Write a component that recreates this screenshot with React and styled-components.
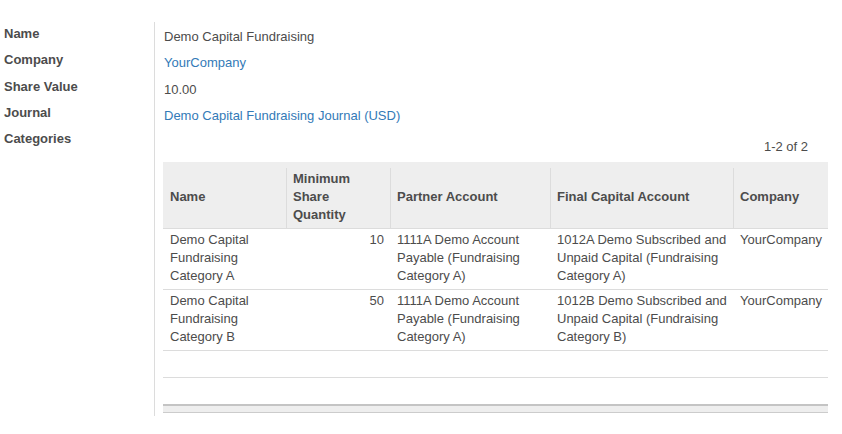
import React from 'react'
import styled, { createGlobalStyle } from 'styled-components'

const fields = [
  { label: 'Name', value: 'Demo Capital Fundraising' },
  { label: 'Company', value: 'YourCompany', link: true },
  { label: 'Share Value', value: '10.00' },
  { label: 'Journal', value: 'Demo Capital Fundraising Journal (USD)', link: true },
]

const columns = [
  { title: 'Name', width: 123 },
  { title: 'Minimum Share Quantity', width: 104 },
  { title: 'Partner Account', width: 160 },
  { title: 'Final Capital Account', width: 183 },
  { title: 'Company', width: 95 },
]

const categories = [
  {
    name: 'Demo Capital Fundraising Category A',
    qty: 10,
    partner: '1111A Demo Account Payable (Fundraising Category A)',
    capital: '1012A Demo Subscribed and Unpaid Capital (Fundraising Category A)',
    company: 'YourCompany',
  },
  {
    name: 'Demo Capital Fundraising Category B',
    qty: 50,
    partner: '1111A Demo Account Payable (Fundraising Category A)',
    capital: '1012B Demo Subscribed and Unpaid Capital (Fundraising Category B)',
    company: 'YourCompany',
  },
]

const App = () => {
  return (
    <>
      <GlobalStyle />
      <Page>
        <Labels>
          {fields.map(({ label }) => (
            <Label key={label}>{label}</Label>
          ))}
          <Label>Categories</Label>
        </Labels>
        <Content>
          {fields.map(({ label, value, link }) => (
            <Value key={label} $link={link}>{value}</Value>
          ))}
          <Pager>1-2 of 2</Pager>
          <Table>
            <colgroup>
              {columns.map(({ title, width }) => (
                <col key={title} style={{ width }} />
              ))}
            </colgroup>
            <thead>
              <tr>
                {columns.map(({ title }, i) => (
                  <Th key={title} $divider={i > 0}>{title}</Th>
                ))}
              </tr>
            </thead>
            <tbody>
              {categories.map((c) => (
                <Row key={c.name}>
                  <Td>{c.name}</Td>
                  <Td $num>{c.qty}</Td>
                  <Td>{c.partner}</Td>
                  <Td>{c.capital}</Td>
                  <Td>{c.company}</Td>
                </Row>
              ))}
              <EmptyRow $border><td colSpan={5} /></EmptyRow>
              <EmptyRow><td colSpan={5} /></EmptyRow>
            </tbody>
            <tfoot>
              <Foot><td colSpan={5} /></Foot>
            </tfoot>
          </Table>
        </Content>
      </Page>
    </>
  )
}

export default App

const GlobalStyle = createGlobalStyle`
  body {
    margin: 0;
    background: #fff;
    font-family: "Liberation Sans", Arial, sans-serif;
    font-size: 13px;
    color: #4c4c4c;
  }
`

const Page = styled.div`
  display: flex;
  align-items: flex-start;
  padding-top: 21px;
`

const Labels = styled.div`
  width: 154px;
  padding-left: 4px;
  box-sizing: border-box;
  flex-shrink: 0;
`

const Label = styled.div`
  font-weight: bold;
  line-height: 26.3px;
`

const Content = styled.div`
  flex: 1;
  margin-top: 1px;
  padding: 2px 14px 3px 8px;
  border-left: 1px solid #dcdcdc;
`

const Value = styled.div`
  line-height: 26.3px;
  padding-left: 1px;
  color: ${(p) => (p.$link ? '#337ab7' : '#4c4c4c')};
`

const Pager = styled.div`
  text-align: right;
  line-height: 18px;
  margin-top: 9px;
  padding-right: 20px;
  margin-bottom: 6px;
`

const Table = styled.table`
  width: 665px;
  table-layout: fixed;
  border-collapse: collapse;
  border-spacing: 0;
`

const Th = styled.th`
  text-align: left;
  vertical-align: middle;
  font-weight: bold;
  line-height: 18px;
  padding: 8px 7px 4px;
  border-bottom: 1px solid #dcdcdc;
  background: ${(p) =>
    p.$divider
      ? 'linear-gradient(#dcdcdc, #dcdcdc) left 6px / 1px calc(100% - 6px) no-repeat, #eeeeee'
      : '#eeeeee'};
`

const Row = styled.tr`
  border-bottom: 1px solid #dcdcdc;
`

const Td = styled.td`
  vertical-align: top;
  line-height: 18px;
  padding: 2px 6px 4px 7px;
  text-align: ${(p) => (p.$num ? 'right' : 'left')};
`

const EmptyRow = styled.tr`
  height: 27px;
  border-bottom: ${(p) => (p.$border ? '1px solid #dcdcdc' : 'none')};
`

const Foot = styled.tr`
  td {
    height: 6px;
    padding: 0;
    background: #eeeeee;
    border-top: 2px solid #c4c4c4;
    border-bottom: 1px solid #cccccc;
  }
`
